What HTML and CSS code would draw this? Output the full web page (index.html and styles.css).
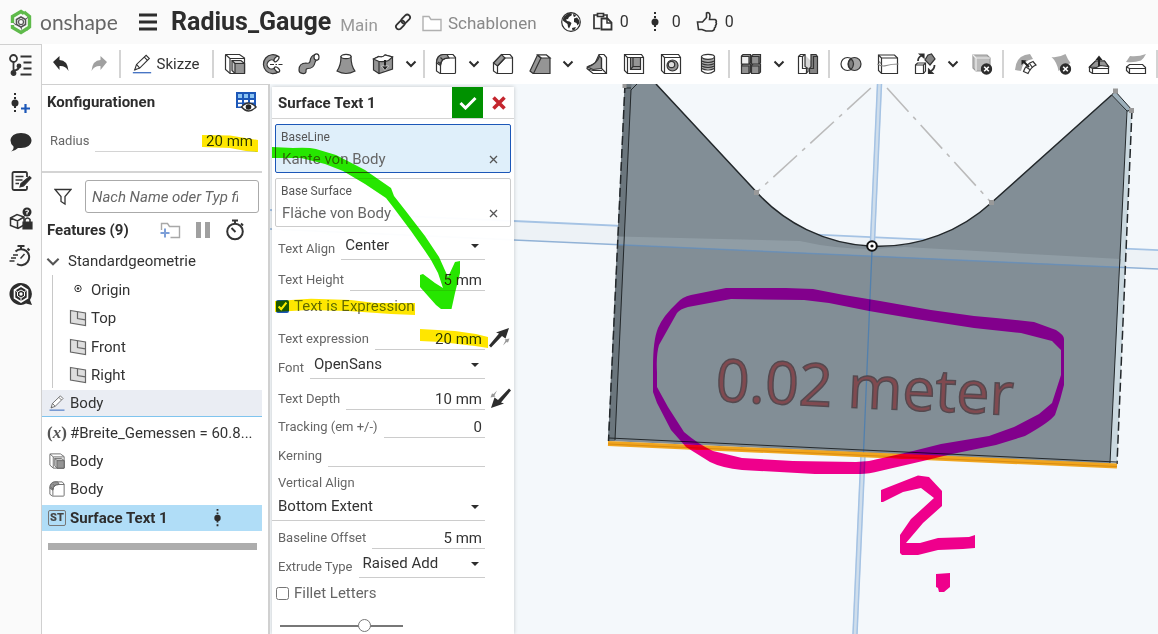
FILE: index.html
```html
<!DOCTYPE html>
<html lang="de">
<head>
<meta charset="utf-8">
<meta name="viewport" content="width=device-width, initial-scale=1">
<title>Radius_Gauge</title>
<link rel="stylesheet" href="styles.css">
</head>
<body>
<svg class="defs" aria-hidden="true">
  <defs>
    <symbol id="chev" viewBox="0 0 12 8"><path d="M1.500 1.500 6 6l4.500-4.500" fill="none" stroke="#2d2d2d" stroke-width="2"/></symbol>
    <symbol id="extrude" viewBox="0 0 24 24"><path d="M2.500 3.500q0-1 1-1h13l5 3.500v14.500q0 1-1 1H7l-4.500-4Z" fill="#fff"/><path d="M2.500 2.500 7 6.500V21M7 6.500h14"/><path d="M9 8.500h9l3.500 3v10H12l-3-3Z" fill="#c8c8c8"/><path d="M12 11.500h9.500v10H12Z" fill="#959595"/><path d="m9 8.500 3 3"/></symbol>
    <symbol id="fillet" viewBox="0 0 24 24"><path d="M2.500 19V10Q3 3 9 2.500h10l2.500 3v15q0 1-1 1H6Z" fill="#fff"/><path d="M2.500 11Q3 3 9 2.500h4L15 6q-8 0-8.500 7.500Z" fill="#959595"/><path d="M6.500 21V13Q7 6 14 6h7.500M4 10l3 2M6.500 5.500 9 8"/></symbol>
    <symbol id="pencil" viewBox="0 0 24 24"><path d="m4 18.500 2-6L16.500 2.500l3.500 3.500L9.500 16.500Z" fill="#fff"/><path d="m6 12.500 3.500 4M14.500 4.500 18 8M4 18.500l2-1"/><path d="M2 21.500h20" stroke="#3b6cc0" stroke-width="1.400"/></symbol>
    <symbol id="plane" viewBox="0 0 18 18"><path d="M1.500 1.500 16.500 4v12.500L1.500 14Z" fill="#dedede"/><path d="M8.500 2.700v6.800l8 1.300"/></symbol>
    <symbol id="version" viewBox="0 0 12 22"><circle cx="6" cy="11" r="3.500" fill="#2d2d2d" stroke="none"/><path d="M6 1v7M6 14v7" stroke="#2d2d2d" stroke-width="2" stroke-dasharray="2 2"/></symbol>
    <symbol id="delx" viewBox="0 0 12 12"><circle cx="6" cy="6" r="5.700" fill="#2d2d2d" stroke="none"/><path d="m3.700 3.700 4.600 4.600m0-4.600L3.700 8.300" stroke="#fff" stroke-width="1.600"/></symbol>
    <symbol id="flip" viewBox="0 0 22 20"><path d="M20 0 16.500 10.500l-3.500-2.500L2 19.500 0 17.500 10 5.500 7 4.500Z" fill="#2d2d2d" stroke="none"/><path d="m20.500 10.500-1.500 4-1.500-.5-3.500 3.500 2.500-5-1-1Z" fill="#999" stroke="none"/></symbol>
  </defs>
</svg>

<header class="topbar">
  <a class="brand" href="#" aria-label="onshape">
    <svg class="brand-mark" viewBox="0 0 22 26"><g fill="none" stroke="#5fba4b" stroke-width="3.400"><path d="M2.500 14V7.500L11 2.500l3 2"/><path d="M14 3l5.500 4.500V18l-3.500 2.500"/><path d="M2.500 16v2.500l8.500 5 5.500-3.500"/></g><path d="m11 8 4.500 2.500v5L11 18l-4.500-2.500v-5Z" fill="none" stroke="#555" stroke-width="1.600"/><circle cx="11" cy="13" r="2.500" fill="none" stroke="#555" stroke-width="1.200"/><path d="M6 16 3.500 14M15.500 10 18 8.500M11 18l.5 2.500" stroke="#555"/></svg>
    <span class="brand-name">onshape</span>
  </a>
  <button class="plain menu" aria-label="Menü"><svg width="18" height="18" viewBox="0 0 18 18"><path d="M0 2h18M0 9h18M0 16h18" stroke="#2d2d2d" stroke-width="3"/></svg></button>
  <h1 class="doc-title">Radius_Gauge</h1>
  <span class="branch">Main</span>
  <button class="plain link-btn" aria-label="Link"><svg class="ic" width="18" height="18" viewBox="0 0 18 18"><g stroke-width="1.800" transform="rotate(-45 9 9)"><rect x="0" y="6.500" width="10" height="5.500" rx="2.750"/><rect x="8" y="6" width="10" height="5.500" rx="2.750"/></g></svg></button>
  <a class="folder" href="#"><svg width="20" height="17" viewBox="0 0 20 17"><path d="M1 15.500V1.500h6l2 3h10v11Z" fill="#fff" stroke="#b0b0b0" stroke-width="1.400"/></svg>Schablonen</a>
  <button class="plain globe" aria-label="Öffentlich"><svg width="20" height="20" viewBox="0 0 20 20"><circle cx="10" cy="10" r="9.300" fill="#fff" stroke="#2d2d2d" stroke-width="1.200"/><path d="M3 4.500 8 1l3 .5-.5 2L8 5l-1 2-2 .5 1 1.500 2.500.5 2 1.500-1 2.500-1.500 3L7 15l-.5-3L3 9.500 1.500 8ZM12 2l3 1-1 2-1.500-.5ZM13 6.500l3-1 2 2.500.5 3-2 2.500-1-2.500-2.500-1ZM11 16l4-1-1.500 3-2 .5Z" fill="#2d2d2d"/></svg></button>
  <button class="plain count count-paste"><svg class="ic" width="20" height="20" viewBox="0 0 20 20"><path d="M7.500 16.500H1V3h3.500M11 3h3v3M4.500 4.500v-3h6v3Z" stroke-width="1.700"/><path d="M8.500 6.500h6l4 4v7h-10Z" fill="#fff" stroke-width="1.800"/><path d="M14 6.500v4.500h4.500" stroke-width="1.500"/></svg>0</button>
  <button class="plain count count-version"><svg width="12" height="22"><use href="#version"/></svg>0</button>
  <button class="plain count"><svg class="ic" width="22" height="22" viewBox="0 0 22 22"><path d="M1.500 11h5l4-4.500V2q3-1.500 3.500 2.500l-.5 4H19q2 1 1 3 1 1.500-.5 3 .5 1.500-1 2.500 0 2.500-2.500 3H10l-4-1.500H2.500Z" stroke-width="1.600"/></svg>0</button>
</header>

<div class="app">
  <nav class="rail" aria-label="Werkzeuge">
    <button class="plain rail-btn" aria-label="Baum"><svg class="ic" width="24" height="24" viewBox="0 0 24 24"><g stroke-width="1.800"><circle cx="4.500" cy="5.500" r="3.500"/><circle cx="4.500" cy="20" r="2" fill="#2d2d2d"/><circle cx="10" cy="13" r="1.500" fill="#2d2d2d"/><path d="M4.500 9v10M10 14q-.5 3-5 3.500M11.500 3.500h11M14.500 9.500h8M14.500 15.500h8M11.500 21.500h11"/></g></svg></button>
    <button class="plain rail-btn" aria-label="Version erstellen"><svg width="24" height="24" viewBox="0 0 24 24"><use href="#version" x="0" y="0" width="12" height="22"/><path d="M16.500 12v9M12 16.500h9" stroke="#1c57b8" stroke-width="2.200"/></svg></button>
    <button class="plain rail-btn" aria-label="Kommentare"><svg width="24" height="22" viewBox="0 0 24 22"><path d="M12 1c6 0 10.500 3 10.500 7.500S18 16 12 16H9q-3 3-7 3.500 3-2 2.500-5Q1.500 12 1.500 8.500C1.500 4 6 1 12 1Z" fill="#2d2d2d"/></svg></button>
    <button class="plain rail-btn" aria-label="Notizen"><svg class="ic" width="22" height="22" viewBox="0 0 22 22"><path d="M17 7V3.500Q17 2 15.500 2H4Q2.500 2 2.500 3.500v15Q2.500 20 4 20h11.500q1.500 0 1.500-1.500V16" stroke-width="1.800"/><path d="M5.500 6.500h8M5.500 10h7M5.500 13.500h3.500" stroke-width="1.500"/><path d="m10 17 1-3.500 8.500-7L21 8l-7.500 8Z" fill="#2d2d2d"/></svg></button>
    <button class="plain rail-btn" aria-label="Teile"><svg class="ic" width="24" height="24" viewBox="0 0 24 24"><path d="M1.500 11 8 7.500l7 2.500v8l-6 3.500-7.500-3Z M1.500 11l7 3 6.500-4M8.500 14v7" stroke-width="1.500"/><circle cx="18" cy="5" r="4.500" fill="#2d2d2d" stroke="none"/><path d="M16.500 4q1.500-2 3 0 0 1-1.500 1.500v2" stroke="#fff" stroke-width="1.200"/><path d="M14 15h9v7h-9Z" fill="#2d2d2d"/><path d="M16 15v-2.500q2.500-3 5 0V15" stroke-width="1.600"/></svg></button>
    <button class="plain rail-btn" aria-label="Leistung"><svg class="ic" width="24" height="24" viewBox="0 0 24 24"><path d="M6.500 6.500A8 8 0 1 1 8 19M8.500 1h7M12 1v3M18.500 3.500l2 2" stroke-width="2"/><path d="M4 10h5M2 13h5M.5 16h5M11.500 13.500l4-4.500" stroke-width="1.500"/></svg></button>
    <button class="plain rail-btn" aria-label="Suche"><svg width="24" height="24" viewBox="0 0 24 24"><path d="M12 0a11 11 0 1 0 5 20.500l6 1.500-2-5A11 11 0 0 0 12 0Z" fill="#2d2d2d"/><path d="m12 3 6.500 4v8L12 19l-6.500-4V7Z" fill="none" stroke="#fff" stroke-width="1.600"/><path d="m12 7 3.500 2v4L12 15l-3.500-2V9ZM8.500 9 6 7M15.500 9l2-2M12 15v4" fill="none" stroke="#fff"/><circle cx="12" cy="11" r="1.700" fill="#fff"/></svg></button>
  </nav>

  <div class="main">
    <div class="toolbar" role="toolbar">
      <button class="plain tool" aria-label="Rückgängig"><svg width="16" height="18" viewBox="0 0 16 18"><path d="M0 7 6.500 1v4q8 0 9 11-3-5.500-9-5v4Z" fill="#2d2d2d"/></svg></button>
      <button class="plain tool" aria-label="Wiederholen"><svg width="16" height="18" viewBox="0 0 16 18"><path d="M16 7 9.500 1v4q-8 0-9 11 3-5.500 9-5v4Z" fill="#a0a0a0"/></svg></button>
      <span class="sep"></span>
      <button class="plain sketch"><svg class="ic" width="22" height="22"><use href="#pencil"/></svg>Skizze</button>
      <span class="sep"></span>
      <button class="plain tool" aria-label="Extrudieren"><svg class="ic"><use href="#extrude"/></svg></button>
      <button class="plain tool" aria-label="Rotieren"><svg class="ic" viewBox="0 0 24 24"><path d="M18.500 4.500A9.500 9.500 0 1 0 19 19.500l-4-4a4.500 4.500 0 1 1-.5-6.500Z" fill="#959595"/><ellipse cx="16.500" cy="7" rx="1.800" ry="3.200" transform="rotate(40 16.500 7)" fill="#fff"/><ellipse cx="17" cy="17.500" rx="1.800" ry="3.200" transform="rotate(-45 17 17.500)" fill="#fff"/><path d="M10 12.500h13" stroke-dasharray="4 1.500 1.500 1.500"/></svg></button>
      <button class="plain tool" aria-label="Sweep"><svg class="ic" viewBox="0 0 24 24"><path d="M2 18c0-5 3-7 7-7 4 1 4-1 4.500-4 1-3 3-4.500 6-4.500l2 5q-3 0-3.500 3c-1 5-4 6-7 6-2 0-2 1-2 3.500-1 2.500-7 2-7-2Z" fill="#959595"/><ellipse cx="19.500" cy="5" rx="2.500" ry="3.200" fill="#fff"/></svg></button>
      <button class="plain tool" aria-label="Loft"><svg class="ic" viewBox="0 0 24 24"><path d="M7 4.500q0 9-4 14.500 9 5 18 0-4-5-4-14.500Z" fill="#959595"/><ellipse cx="12" cy="4.500" rx="5" ry="2.200" fill="#fff"/></svg></button>
      <button class="plain tool" aria-label="Aufdicken"><svg class="ic" viewBox="0 0 24 24"><path d="M2.500 7 8 4.500q4 1 6-1.500l7.500 2v12L8 21.500 2.500 18Z" fill="#959595"/><path d="M2.500 7 8 4.500q4 1 6-1.500l7.500 2-4 3.500Q14 10 8 9.500Z" fill="#fff"/><path d="M8 9.500v12"/><path d="M14 8v9" stroke="#222" stroke-width="2"/><path d="m10.500 14 3.500 4.500 3.500-4.500Z" fill="#222" stroke="#fff" stroke-width=".6"/></svg></button>
      <button class="plain more" aria-label="Mehr"><svg><use href="#chev"/></svg></button>
      <span class="sep"></span>
      <button class="plain tool" aria-label="Verrundung"><svg class="ic"><use href="#fillet"/></svg></button>
      <button class="plain more" aria-label="Mehr"><svg><use href="#chev"/></svg></button>
      <button class="plain tool" aria-label="Fase"><svg class="ic" viewBox="0 0 24 24"><path d="M2.500 19v-8l8-8.500H19l2.500 3v15q0 1-1 1H6Z" fill="#fff"/><path d="m2.500 11 8-8.500L14 6l-7.500 8Z" fill="#959595"/><path d="M6.500 21v-7L14 6h7.500"/></svg></button>
      <button class="plain tool" aria-label="Entformung"><svg class="ic" viewBox="0 0 24 24"><path d="M2 19 9.500 3h9L22 6v15.500H5Z" fill="#959595"/><path d="M9.500 3h9L22 6h-9Z" fill="#fff"/><path d="M9.500 3 13 6 5.500 21.500"/></svg></button>
      <button class="plain more" aria-label="Mehr"><svg><use href="#chev"/></svg></button>
      <button class="plain tool" aria-label="Rippe"><svg class="ic" viewBox="0 0 24 24"><path d="M14 2.500h5l2.500 3v16H8l-6-5 1-2 7-3Z" fill="#fff"/><path d="M2.500 15Q12 12 14.500 4l2 2.500v10L8 17.500Z" fill="#959595"/><path d="M16.500 5.500v11l5 5M3 17l5 1.500h9"/></svg></button>
      <button class="plain tool" aria-label="Wandung"><svg class="ic" viewBox="0 0 24 24"><path d="M2.500 2.500h17l2 3v16h-16l-3-3Z" fill="#fff"/><path d="M2.500 2.500 5.500 5.500v16M5.500 5.500h16"/><path d="M8.500 5.500h10v12h-10Z" fill="#959595"/><path d="M11 5.500v9h7.500M11 14.500l-2.500 3"/></svg></button>
      <button class="plain tool" aria-label="Bohrung"><svg class="ic" viewBox="0 0 24 24"><path d="M2.500 2.500h17l2 3v16h-16l-3-3Z" fill="#fff"/><path d="M2.500 2.500 5.500 5.500v16M5.500 5.500h16"/><circle cx="13.500" cy="13.500" r="5.500" fill="#959595"/><circle cx="12.500" cy="12.500" r="3.200" fill="#ddd"/></svg></button>
      <button class="plain tool" aria-label="Gewinde"><svg class="ic" viewBox="0 0 24 24"><path d="M5.500 5v14q6.500 5 13 0V5Z" fill="#fff"/><path d="M6 7h12v10H6Z" fill="#a8a8a8" stroke="none"/><ellipse cx="12" cy="4.800" rx="6.500" ry="2.500" fill="#fff"/><path d="M5.500 9q6.500 3 13 0M5.500 11.500q6.500 3 13 0M5.500 14q6.500 3 13 0M5.500 16.500q6.500 3 13 0"/></svg></button>
      <span class="sep"></span>
      <button class="plain tool" aria-label="Muster"><svg class="ic" viewBox="0 0 24 24"><g fill="#909090"><path d="M2.500 4 4 2.500h7.500v8L10 12H2.500ZM12.500 4 14 2.500h7.500v8L20 12h-7.500ZM2.500 13.500 4 12h7.500v8L10 21.500H2.500ZM12.500 13.500 14 12h7.500v8L20 21.500h-7.500Z"/></g><path d="M2.500 4.500H10V12H2.500Z" fill="#eee"/><path d="M12.500 4.500H20V12M2.500 14H10v7M12.500 14H20v7"/></svg></button>
      <button class="plain more" aria-label="Mehr"><svg><use href="#chev"/></svg></button>
      <button class="plain tool" aria-label="Spiegeln"><svg class="ic" viewBox="0 0 24 24"><path d="M9 3l6 6v9l-6-3Z" fill="#d5d5d5" stroke="none"/><path d="M2.500 4.500 4.500 2.500H9v12l3 2v3l-2 2H2.500Z" fill="#fff"/><path d="M2.500 4.500h4v12h4v5M6.500 4.500 9 2.500"/><path d="M21.500 4.500 20 2.500h-5v12l-1.500 2v5h8Z" fill="#858585"/><path d="M21.500 4.500h-4v12h-4"/></svg></button>
      <span class="sep"></span>
      <button class="plain tool" aria-label="Boolesch"><svg class="ic" viewBox="0 0 24 24"><circle cx="8.500" cy="12" r="6.500" fill="#fff"/><circle cx="15.500" cy="12" r="6.500" fill="#a5a5a5"/><path d="M12 6.500q5 5.500 0 11-5-5.500 0-11Z" fill="#808080"/></svg></button>
      <button class="plain tool" aria-label="Trennen"><svg class="ic" viewBox="0 0 24 24"><path d="M2.500 3h16l3 3v15.500h-16l-3-3Z" fill="#fff"/><path d="M2.500 3 5.500 6v15M5.500 6h16"/><path d="M1.500 12q4 3 9 1.500t12-1.500M3 9.500l2 2" stroke="#888"/></svg></button>
      <button class="plain tool" aria-label="Transformieren"><svg class="ic" viewBox="0 0 24 24"><path d="m2.500 13 2-2h8v8l-2 2.500h-8Z" fill="#fff"/><path d="M2.500 13h8v8M10.500 13l2-2"/><path d="m15 3 3.500-1 3.500 5-5 6-5-5Z" fill="#858585"/><path d="M5 9q0-4 4-5.500" stroke-width="1.800"/><path d="M6.500 2H11v4Z" fill="#222"/><path d="M21.500 13q0 4-3.500 6" stroke-width="1.800"/><path d="M15.500 17v4.500H20Z" fill="#222"/></svg></button>
      <button class="plain more" aria-label="Mehr"><svg><use href="#chev"/></svg></button>
      <button class="plain tool" aria-label="Teil löschen"><svg class="ic" viewBox="0 0 24 24"><path d="M3 3h14l3 3v13H6l-3-3Z" fill="#bbb" stroke="#999"/><path d="M3 3 6 6v13M6 6h14" stroke="#eee"/><use href="#delx" x="10.500" y="11" width="12" height="12"/></svg></button>
      <span class="sep"></span>
      <button class="plain tool" aria-label="Fläche verschieben"><svg class="ic" viewBox="0 0 24 24"><path d="M2 18Q3 3 17 2l3 5Q10 8 8 19Z" fill="#aaa" stroke="none"/><path d="M10.500 19.500Q13 12 20 9.500l3 3.500q-5 2-8 8.500Z" fill="#fff"/><path d="m13 15 4.500 3M16.500 11.500l3 4"/><path d="m16 15-5-5" stroke="#222" stroke-width="2"/><path d="M8.500 8v5l5-4.500Z" fill="#222" stroke="none"/></svg></button>
      <button class="plain tool" aria-label="Fläche löschen"><svg class="ic" viewBox="0 0 24 24"><path d="M1.500 5q7 1 14-3 2 5 5 9l-12 8Q7 10 1.500 5Z" fill="#aaa" stroke="none"/><use href="#delx" x="9.500" y="11" width="12" height="12"/></svg></button>
      <button class="plain tool" aria-label="Fläche versetzen"><svg class="ic" viewBox="0 0 24 24"><path d="m2.500 15 6-6h9l4 5.500v7h-16l-3-2Z" fill="#fff"/><path d="m2.500 15 6-6h9l4 5.500-8-1-4 2Z" fill="#959595"/><path d="M5.500 16.500v5M2.500 15l3 1.500h16"/><path d="M12 14V6" stroke="#222" stroke-width="2"/><path d="M8.500 8 12 3.500 15.500 8Z" fill="#222" stroke="none"/></svg></button>
      <button class="plain tool" aria-label="Fläche ersetzen"><svg class="ic" viewBox="0 0 24 24"><path d="m2 10 4-6q8 1 16-2-2 4-5 6.500-7 2.500-15 1.500Z" fill="#aaa" stroke="none"/><path d="m2.500 15 3-2.500h13l3 3v6h-16l-3-3Z" fill="#fff"/><path d="m2.500 15 3 1.500h16M5.500 16.500v5"/></svg></button>
      <span class="sep"></span>
    </div>

    <div class="workspace">
      <aside class="panel">
        <section class="config">
          <div class="panel-head">
            <h2>Konfigurationen</h2>
            <button class="plain" aria-label="Konfigurationstabelle"><svg width="21" height="21" viewBox="0 0 21 21"><path d="M0 0h20v16H0Z" fill="#1c57b8"/><path d="M2 2h4v4H2ZM8 2h4v4H8ZM14 2h4v4h-4Z" fill="#8cc4f2"/><path d="M2 8h4v2.500H2ZM8 8h4v2.500H8ZM14 8h4v2.500h-4ZM2 12h4v2.500H2Z" fill="#fff"/><path d="M5.500 15q7-8 14.500 0-7.500 8-14.500 0Z" fill="#fff" stroke="#333" stroke-width="1.500"/><circle cx="12.500" cy="15" r="2.800" fill="#222"/></svg></button>
          </div>
          <div class="config-row"><label for="radius">Radius</label><input id="radius" type="text" value="20 mm"></div>
        </section>
        <div class="filter">
          <svg class="ic" width="18" height="18" viewBox="0 0 18 18"><path d="M1 1.500h16l-6 7V16l-4-2.500v-5Z" fill="#fff" stroke-width="1.300"/></svg>
          <input type="search" aria-label="Filter" placeholder="Nach Name oder Typ fi">
        </div>
        <div class="features-head">
          <h2>Features (9)</h2>
          <button class="plain" aria-label="Ordner hinzufügen"><svg width="21" height="17" viewBox="0 0 21 17"><path d="M1.500 8V1.500h6l2 3h10v11h-9" fill="none" stroke="#a8a8a8" stroke-width="1.400"/><path d="M5 6.500v9M.5 11h9" stroke="#7d9fd8" stroke-width="2"/></svg></button>
          <button class="plain" aria-label="Pause"><svg width="14" height="16"><path d="M0 0h5v16H0ZM9 0h5v16H9Z" fill="#a0a0a0"/></svg></button>
          <button class="plain" aria-label="Zeiten"><svg class="ic" width="20" height="22" viewBox="0 0 20 22"><circle cx="10" cy="12.500" r="7.800" stroke-width="2"/><path d="M7 1.500h6M10 1.500v3M16 4.500l2 2M6.500 9l4 4" stroke-width="1.900"/></svg></button>
        </div>
        <ul class="tree">
          <li class="node root"><svg viewBox="0 0 12 8"><path d="M1 1.500 6 6.500l5-5" fill="none" stroke="#555" stroke-width="1.800"/></svg><span>Standardgeometrie</span></li>
          <li>
            <ul class="subtree">
              <li class="node"><svg class="ic" viewBox="0 0 18 18"><circle cx="9" cy="7.500" r="3.200" stroke-width="1"/><circle cx="9" cy="7.500" r="1.200" fill="#333" stroke="none"/></svg><span>Origin</span></li>
              <li class="node"><svg class="ic thin"><use href="#plane"/></svg><span>Top</span></li>
              <li class="node"><svg class="ic thin"><use href="#plane"/></svg><span>Front</span></li>
              <li class="node"><svg class="ic thin"><use href="#plane"/></svg><span>Right</span></li>
            </ul>
          </li>
          <li class="node hovered"><svg class="ic thin"><use href="#pencil"/></svg><span>Body</span></li>
          <li class="node"><b class="fx">(<i>x</i>)</b><span>#Breite_Gemessen = 60.8...</span></li>
          <li class="node"><svg class="ic thin"><use href="#extrude"/></svg><span>Body</span></li>
          <li class="node"><svg class="ic thin"><use href="#fillet"/></svg><span>Body</span></li>
          <li class="node selected"><b class="st">ST</b><span>Surface Text 1</span><svg class="mark"><use href="#version"/></svg></li>
        </ul>
        <div class="rollback"></div>
      </aside>

      <section class="viewport">
        <svg class="scene" role="img" aria-label="3D-Ansicht">
          <g transform="translate(-270 -84)">
            <path d="M270 210 1200 252V271L270 229Z" fill="#e9f0f4" opacity=".7"/>
            <path d="M270 210 1200 252" stroke="#a5c3e4" stroke-width="1.800"/>
            <path d="M877 84h5L857.500 634h-5Z" fill="#cfdeec"/>
            <path d="M877.500 84 853 634M881.500 84 857 634" stroke="#a5c3e4" stroke-width="1.500"/>
            <path d="M870.800 88 756.700 192.300M887 88 991.400 202.700" stroke="#bbb" stroke-width="1.600" stroke-dasharray="32 7 4 7"/>
            <path d="M625 84h31L756.700 192.300A166 166 0 0 0 991.400 202.700L1111.700 95 1127 111 1112 464 608 441Z" fill="#828e96"/>
            <path d="M1111.700 95 1115 91 1132 110 1117 465H1110L1127 111Z" fill="#cad8df"/>
            <path d="M1112 95 1115 91 1132 110 1127 112Z" fill="#9db0bb"/>
            <path d="M624.500 84h7L615 441h-7Z" fill="#6b767d"/>
            <path d="M619 236.500 800 241Q835 249 872 249L905 247 1121 259 1120 267 618 244.500Z" fill="#94a1a9" opacity=".75"/>
            <path d="M270 229 1200 271" stroke="#5f8fc4" stroke-width="1.500" opacity=".65"/>
            <path d="M872 250 863.500 453" stroke="#5280ad" stroke-width="1.300"/>
            <g fill="none" stroke="#23282b">
              <path d="M656 84 756.700 192.300A166 166 0 0 0 991.400 202.700L1111.700 95" stroke-width="1.500"/>
              <path d="M1111.700 95 1127 111 1110 463M1111.700 95 1115 91 1132 110 1127 111M637 84 631 90 615 440M625 88h6M609 438 1116 462"/>
              <path d="M625 84 608.500 441M1132 110 1117 464" stroke-width="1.500" stroke-dasharray="9 4"/>
            </g>
            <path d="M608 443.500 1117 466" stroke="#f0a51e" stroke-width="5"/>
            <path d="M608 444 1117 466.500" stroke="#d88c12"/>
            <path d="M754 190h5v5h-5ZM989 200h5v5h-5ZM1113 88.500h5v5h-5ZM1129 108h5v5h-5ZM622.500 84h4v4h-4Z" fill="#999"/>
            <circle cx="872" cy="246" r="4.800" fill="#fff" stroke="#111" stroke-width="2"/><circle cx="872" cy="246" r="1.600" fill="#111"/>
            <text class="engraved" x="715" y="401" transform="rotate(2.700 715 401)">0.02 meter</text>
          </g>
        </svg>

        <form class="dialog">
          <header class="dialog-head">
            <h2>Surface Text 1</h2>
            <button type="button" class="plain accept" aria-label="Übernehmen"><svg width="18" height="14" viewBox="0 0 18 14"><path d="m1.500 7 5 5L16.500 2" fill="none" stroke="#fff" stroke-width="3"/></svg></button>
            <button type="button" class="plain cancel" aria-label="Abbrechen"><svg width="14" height="14" viewBox="0 0 14 14"><path d="m1.500 1.500 11 11M12.500 1.500l-11 11" stroke="#c4262e" stroke-width="3.600"/></svg></button>
          </header>
          <div class="pick active"><span class="pick-label">BaseLine</span><div class="pick-item"><span>Kante von Body</span><button type="button" class="plain" aria-label="Entfernen"><svg width="9" height="9"><path d="m1 1 7 7M8 1 1 8" stroke="#555" stroke-width="1.300"/></svg></button></div></div>
          <div class="pick"><span class="pick-label">Base Surface</span><div class="pick-item"><span>Fläche von Body</span><button type="button" class="plain" aria-label="Entfernen"><svg width="9" height="9"><path d="m1 1 7 7M8 1 1 8" stroke="#555" stroke-width="1.300"/></svg></button></div></div>

          <div class="fields">
            <div class="row"><label for="align">Text Align</label><span class="select"><select id="align"><option>Center</option></select></span></div>
            <div class="row tall"><label for="height">Text Height</label><input id="height" type="text" value="5 mm"></div>
            <label class="check"><input type="checkbox" checked>Text is Expression</label>
            <div class="row"><label for="expr">Text expression</label><input id="expr" type="text" value="20 mm"><button type="button" class="plain flip" aria-label="Umkehren"><svg width="22" height="20"><use href="#flip"/></svg></button></div>
            <div class="row"><label for="font">Font</label><span class="select"><select id="font"><option>OpenSans</option></select></span></div>
            <div class="row tall"><label for="depth">Text Depth</label><input id="depth" type="text" value="10 mm"><button type="button" class="plain flip down" aria-label="Umkehren"><svg width="22" height="20"><use href="#flip"/></svg></button></div>
            <div class="row short"><label for="track">Tracking (em +/-)</label><input id="track" type="text" value="0"></div>
            <div class="row"><label for="kern">Kerning</label><input id="kern" type="text" value=""></div>
            <div class="stack"><label for="valign">Vertical Align</label><span class="select"><select id="valign"><option>Bottom Extent</option></select></span></div>
            <div class="row short"><label for="offset">Baseline Offset</label><input id="offset" type="text" value="5 mm"></div>
            <div class="row"><label for="extype">Extrude Type</label><span class="select"><select id="extype"><option>Raised Add</option></select></span></div>
            <label class="check"><input type="checkbox">Fillet Letters</label>
            <input class="slider" type="range" min="0" max="100" value="71" aria-label="Transparenz">
          </div>
        </form>
      </section>
    </div>
  </div>
</div>

<svg class="markup" aria-hidden="true">
  <g fill="#ffe600">
    <path d="M202 135 230 135.500 258 140V152L246 151 230 148 202 147Z"/>
    <path d="M275 301 311 298.700 351 300 375 303H415V315L391 314 348 311 308 310 275 312Z"/>
    <path d="M420 329 455 331 476 334 488 337V348L475 346 441 342 420 341Z"/>
  </g>
  <path fill="#26e600" d="M272 147 293 148Q308 147 316 149L336 155 365 170 391 188 394 196 405 210 425 236 439 257 448 277 455 262 460 261V273L455 293 451.500 309H441L436 305 420 287V275L423 274 435 283 443 288 438 273 431 260 425 251 411 231 393 207 386 198 365 184 343 171 325 164 301 158 272 158Z"/>
  <g fill="#ef008c">
    <path fill-rule="evenodd" d="M726 288 786 288 813 289 844 295 880 301 931 310 974 316 996 318 1034 322 1056 330Q1064 335 1064 339V385L1060 400 1055 415Q1050 422 1025 436L996 445 952 454 923 461 880 471Q869 474 860 474H815L742 470Q722 468 710 462L686 447 671 430 657 403 653 392V367Q653 340 658 328T677 303Q682 297 691 295ZM731 299 804 300 829 303 869 311 916 319 974 328 1021 333 1052 341 1061 350V375L1052 403 1039 414 1014 427 989 436 941 444 909 452 869 461 856 462 793 461 742 458 713 451Q698 444 684 432L668 407 657 387V372Q656 355 659 345L677 313Q680 309 688 307Z"/>
    <path d="M881 490 918 475.500 929 477 942 491V506L923 523 906 543 920 543 938 538 969 537 975 535V548L963 549 938 550 918 555H902L900 553V535L911 519 934 498 921 488 903 492 883 502H881Z"/>
    <path d="M936 574 950 573V587L944 592H939L938 588 936 587Z"/>
  </g>
</svg>
</body>
</html>
```
FILE: styles.css
```css
* { box-sizing: border-box; }

html, body { height: 100%; }

body {
  position: relative;
  display: flex;
  flex-direction: column;
  margin: 0;
  overflow: hidden;
  background: #fff;
  color: #333;
  font: 15px/20px Roboto, "Liberation Sans", sans-serif;
}

h1, h2, ul { margin: 0; padding: 0; }
ul { list-style: none; }
h2 { font-size: 15px; font-weight: 700; color: #2d2d2d; }
input, select, button { font: inherit; color: inherit; }
svg { display: block; flex: none; }

.defs { position: absolute; width: 0; height: 0; }

.plain {
  display: flex;
  align-items: center;
  justify-content: center;
  flex: none;
  padding: 0;
  border: 0;
  background: none;
}

.ic { fill: none; stroke: #333; stroke-width: 1.2; }
.ic.thin { stroke: #666; }

/* top bar */
.topbar {
  display: flex;
  align-items: center;
  flex: none;
  height: 44px;
  padding-left: 10px;
  background: #fafafa;
  white-space: nowrap;
}
.brand { display: flex; align-items: center; width: 129px; gap: 8px; color: #666; text-decoration: none; }
.brand-mark { width: 22px; height: 26px; }
.brand-name { font: 21px/26px Lato, sans-serif; }
.menu { width: 18px; margin-right: 14px; }
.doc-title { font-size: 25px; line-height: 46px; font-weight: 700; color: #2d2d2d; }
.branch { margin-left: 9px; padding-top: 6px; font-size: 17px; color: #999; }
.link-btn { margin-left: 16px; }
.folder { display: flex; align-items: center; gap: 6px; margin: 2px 24px 0 10px; font-size: 17px; color: #888; text-decoration: none; }
.count { gap: 7px; margin-left: 22px; font-size: 16px; }
.count-paste { margin-left: 12px; }
.count-version { gap: 11px; margin-left: 20px; }
.count:last-child { margin-left: 15px; }

/* frame */
.app { display: flex; flex: 1; min-height: 0; }
.rail {
  display: flex;
  flex-direction: column;
  flex: none;
  width: 42px;
  border: solid #d0d0d0;
  border-width: 1px 1px 0 0;
  background: #fafafa;
}
.rail-btn { height: 38px; }
.rail-btn:nth-child(-n+3) { height: 39px; }
.main { display: flex; flex-direction: column; flex: 1; min-width: 0; }

/* toolbar */
.toolbar { display: flex; flex: none; height: 40px; overflow: hidden; background: #fff; }
.tool { width: 37px; }
.tool:first-child { width: 38px; }
.tool .ic { width: 24px; height: 24px; }
.more { width: 20px; }
.more svg { width: 12px; height: 8px; }
.sep { flex: none; width: 2px; height: 28px; margin: 6px 2px; background: #d4d4d4; }
.sketch { width: 87px; gap: 4px; padding-right: 3px; font-size: 15px; }

.workspace { display: flex; flex: 1; min-height: 0; }

/* feature panel */
.panel {
  flex: none;
  width: 228px;
  padding-right: 6px;
  border: solid #d0d0d0;
  border-width: 1px 2px 0 0;
  background: #fff;
}
.config { height: 88px; padding: 6px 5px 0; border-bottom: 2px solid #d4d4d4; }
.panel-head { display: flex; align-items: center; justify-content: space-between; height: 22px; }
.config-row { display: flex; align-items: center; margin: 17px 0 0 3px; font-size: 13px; color: #666; }
.config-row input {
  flex: 1;
  min-width: 0;
  height: 22px;
  margin-left: 6px;
  padding: 0 4px 0 0;
  border: 0;
  border-bottom: 1px solid #d4d4d4;
  background: none;
  font-size: 15px;
  color: #333;
  text-align: right;
}
.filter { display: flex; align-items: center; gap: 13px; padding: 7px 3px 0 12px; }
.filter input {
  flex: 1;
  min-width: 0;
  height: 33px;
  padding: 0 6px;
  border: 1px solid #aaa;
  border-radius: 3px;
  font-size: 15px;
  font-style: italic;
}
.filter input::placeholder { color: #666; }
.features-head { display: flex; align-items: center; gap: 15px; height: 34px; padding: 0 17px 0 5px; }
.features-head h2 { flex: 1; }

.node { display: flex; align-items: center; gap: 4px; height: 28px; padding-left: 6px; white-space: nowrap; }
.node > svg { width: 18px; height: 18px; }
.node.root { padding-left: 4px; gap: 8px; }
.node.root > svg { width: 14px; height: 9px; }
.subtree { position: relative; padding-left: 21px; }
.subtree .node:nth-child(odd) { height: 29px; }
.subtree::before {
  content: "";
  position: absolute;
  top: 0;
  bottom: 1px;
  left: 10px;
  border-left: 1px solid #c8c8c8;
}
.node.hovered { height: 27px; margin: 1px 0 2px; border-bottom: 1px solid #7fc4ee; background: #eaedf3; }
.node.selected { height: 26px; margin-top: 2px; background: #b0ddf7; font-weight: 700; color: #2d2d2d; }
.node .mark { width: 11px; height: 20px; margin: 0 39px 0 auto; }
.fx { display: flex; justify-content: center; width: 18px; font: 700 17px/18px "Liberation Serif", serif; color: #555; }
.st { width: 18px; border: 1px solid #777; border-radius: 2px; font-size: 11px; line-height: 14px; text-align: center; color: #444; }
.rollback { height: 7px; margin: 12px 5px 0 6px; background: #adadad; }

/* 3D view */
.viewport { position: relative; flex: 1; min-width: 0; overflow: hidden; background: #f4f8fb; }
.scene { width: 100%; height: 100%; }
.engraved { font: 59px "Open Sans", "Noto Sans", sans-serif; fill: #804a50; stroke: #54494f; stroke-width: 1.5; }

/* feature dialog floats over the view */
.dialog {
  position: absolute;
  top: 3px;
  bottom: 0;
  left: 2px;
  width: 242px;
  background: rgba(255, 255, 255, .97);
  box-shadow: 0 0 4px rgba(0, 0, 0, .2);
}
.dialog-head { display: flex; height: 32px; border-bottom: 1px solid #d4d4d4; }
.dialog-head h2 { flex: 1; padding-left: 6px; line-height: 32px; }
.accept { width: 31px; background: #009100; }
.cancel { width: 31px; }
.pick { height: 49px; margin: 5px 3px 0; padding: 3px 5px 0; border: 1px solid #ccc; border-radius: 2px; }
.pick.active { border-color: #1c57b8; background: #dfeffa; }
.pick-label { display: block; font-size: 12px; line-height: 18px; color: #555; }
.pick-item { display: flex; align-items: center; justify-content: space-between; height: 26px; padding: 0 7px 0 1px; color: #666; }

.fields { margin-top: 4px; padding-left: 6px; }
.row { display: flex; align-items: flex-end; height: 29px; margin-right: 29px; }
.row.tall { height: 31px; }
.row.short { height: 28px; }
.row label, .stack label { font-size: 13px; line-height: 22px; color: #666; white-space: nowrap; }
.row > input, .select { flex: 1; min-width: 0; margin-left: 6px; border: 0; border-bottom: 1px solid #ccc; background: none; }
.row > input { height: 22px; padding: 0 3px 0 0; text-align: right; }
.row > .flip { width: 22px; height: 24px; margin: 0 -26px 0 4px; }
.flip.down svg { transform: rotate(180deg); }
.select { position: relative; height: 29px; }
.select select { width: 100%; height: 28px; padding: 0 20px 0 4px; border: 0; background: none; appearance: none; }
.select::after {
  content: "";
  position: absolute;
  top: 13px;
  right: 6px;
  border: 4px solid transparent;
  border-top: 4px solid #2d2d2d;
  border-bottom: 0;
}
.stack { display: flex; flex-direction: column; height: 54px; margin: 0 29px 0 0; }
.stack label { height: 25px; line-height: 32px; }
.stack .select { flex: none; margin-left: -6px; }
.stack select { padding-left: 6px; }
.check { display: flex; align-items: center; gap: 5px; height: 30px; color: #666; }
.check input {
  width: 13px;
  height: 13px;
  margin: 0 0 0 -2px;
  accent-color: #1c57b8;
}
.slider { display: block; width: 123px; height: 16px; margin: 10px 0 0 2px; appearance: none; background: none; }
.slider::-webkit-slider-runnable-track { height: 2px; background: #777; }
.slider::-webkit-slider-thumb {
  width: 13px;
  height: 13px;
  margin-top: -6px;
  appearance: none;
  border: 1px solid #777;
  border-radius: 50%;
  background: #fff;
}

/* hand-drawn marks over the whole window */
.markup {
  position: absolute;
  inset: 0;
  width: 100%;
  height: 100%;
  pointer-events: none;
  mix-blend-mode: darken;
}
```
